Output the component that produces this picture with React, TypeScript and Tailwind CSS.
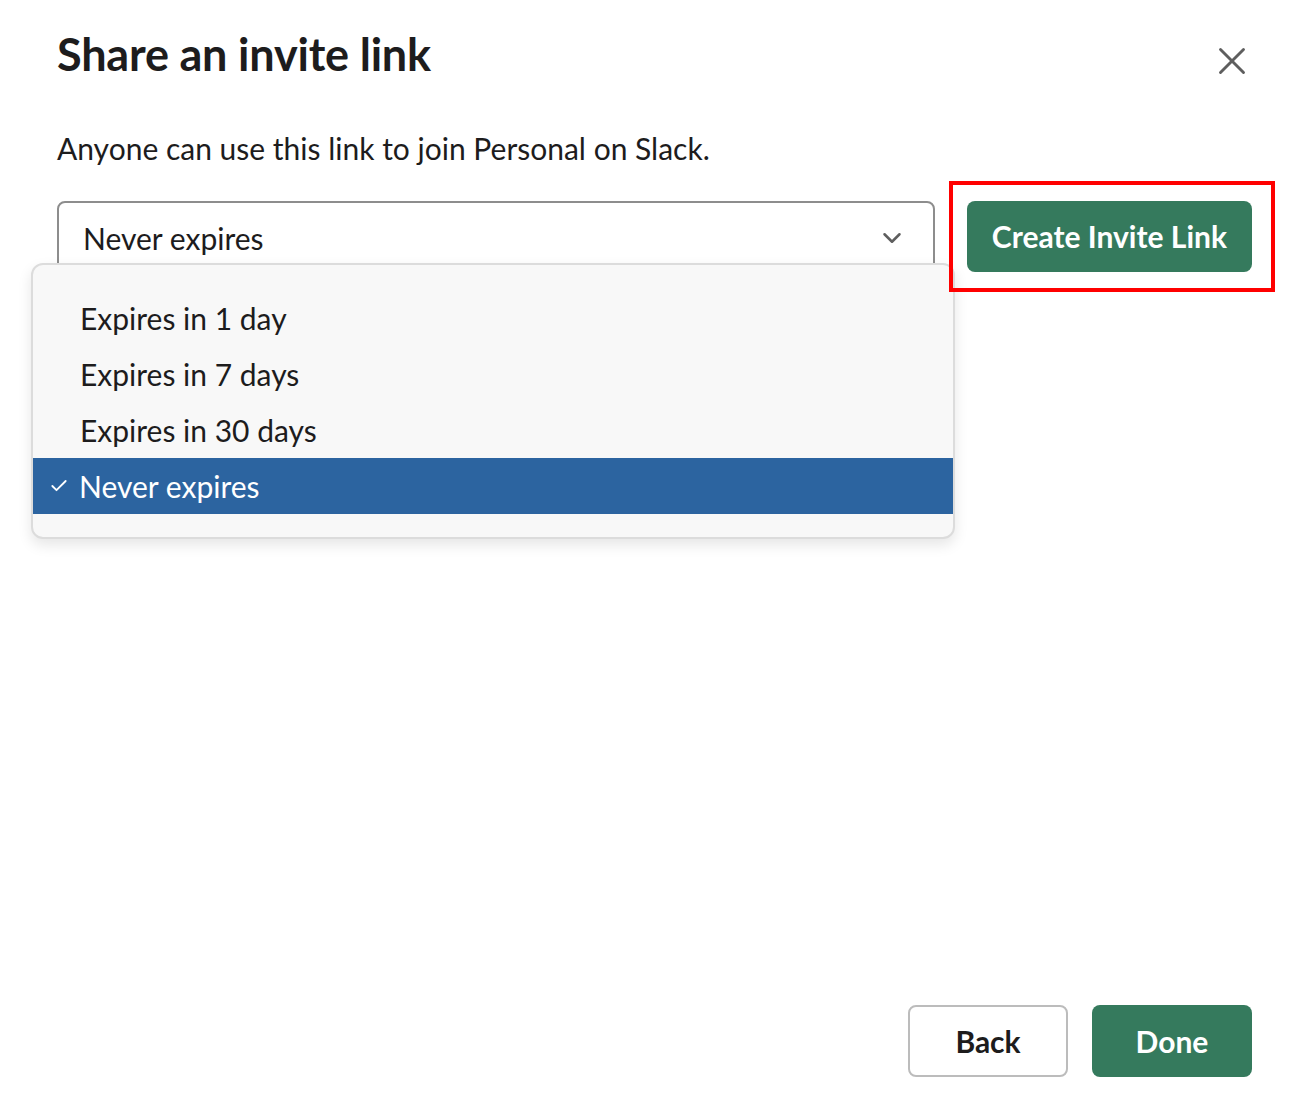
import { Check, ChevronDown, X } from "lucide-react";

const OPTIONS = ["Expires in 1 day", "Expires in 7 days", "Expires in 30 days", "Never expires"];

export default function App() {
  const selected = "Never expires";

  return (
    <div className="h-screen w-full bg-white font-['Lato',sans-serif] text-[#1d1c1d] flex flex-col px-[56px] pt-[26px] pb-[28px]">
      {/* Header */}
      <div className="flex items-start justify-between pl-[1px]">
        <h1 className="text-[45px] font-bold leading-[56px] tracking-[-0.2px]">Share an invite link</h1>
        <button className="mt-[12px] mr-[-3px] text-[#5e5e5e]">
          <X size={46} strokeWidth={1.5} />
        </button>
      </div>

      <p className="mt-[44px] pl-[1px] text-[30px] leading-[40px]">Anyone can use this link to join Personal on Slack.</p>

      {/* Select + action */}
      <div className="mt-[33px] flex items-start gap-[32px] pl-[1px]">
        <div className="relative flex-1">
          <div className="h-[74px] rounded-[8px] border-2 border-[#8d8d8d] flex items-center justify-between pl-[24px] pr-[26px] text-[30px]">
            <span>{selected}</span>
            <ChevronDown size={30} strokeWidth={2} className="text-[#5e5e5e]" />
          </div>

          {/* Open menu */}
          <div className="absolute left-[-26px] top-[62px] w-[924px] rounded-[12px] border-2 border-[#dcdcdc] bg-[#f8f8f8] pt-[25px] pb-[23px] shadow-[0_6px_14px_rgba(0,0,0,0.1)]">
            {OPTIONS.map((opt) => {
              const isSel = opt === selected;
              return (
                <div
                  key={opt}
                  className={
                    isSel
                      ? "h-[56px] flex items-center bg-[#2c64a0] text-white text-[30px] pl-[16px]"
                      : "h-[56px] flex items-center text-[30px] pl-[47px]"
                  }
                >
                  {isSel && <Check size={20} strokeWidth={2.2} className="mr-[10px]" />}
                  {opt}
                </div>
              );
            })}
          </div>
        </div>

        <div className="relative">
          <button className="h-[71px] px-[25px] rounded-[8px] bg-[#357a5d] text-white text-[30px] font-bold">
            Create Invite Link
          </button>
          <div className="absolute left-[-18px] top-[-20px] right-[-23px] bottom-[-20px] border-[4px] border-[#ff0000] pointer-events-none" />
        </div>
      </div>

      {/* Footer */}
      <div className="mt-auto flex justify-end gap-[24px]">
        <button className="w-[160px] h-[72px] rounded-[8px] border-2 border-[#bcbcbc] bg-white text-[30px] font-bold">
          Back
        </button>
        <button className="w-[160px] h-[72px] rounded-[8px] bg-[#357a5d] text-white text-[30px] font-bold">
          Done
        </button>
      </div>
    </div>
  );
}
